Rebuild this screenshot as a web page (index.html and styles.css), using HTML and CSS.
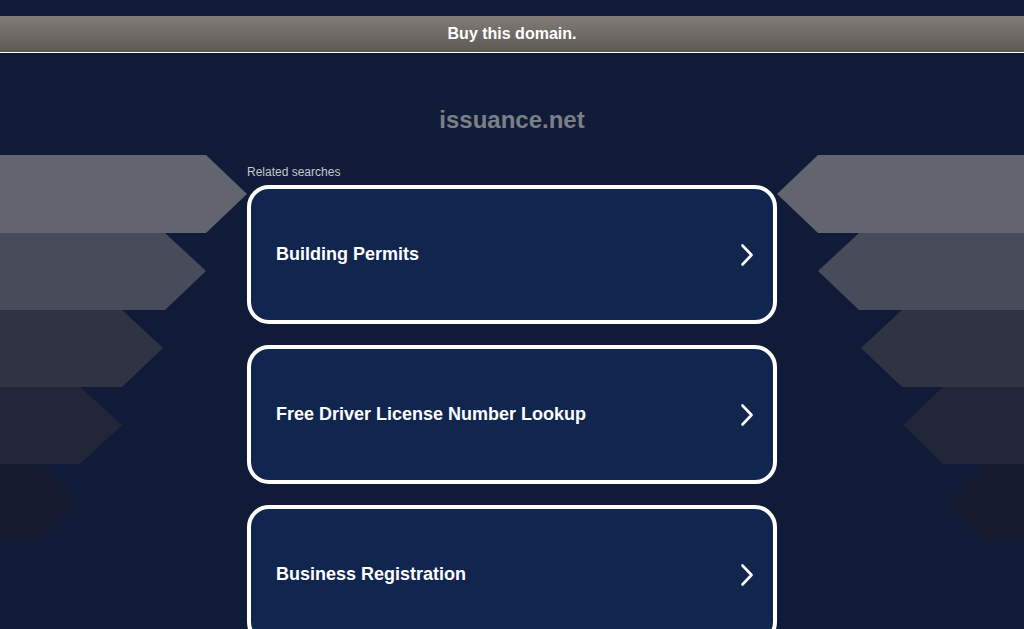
FILE: index.html
```html
<!DOCTYPE html>
<html>
<head>
<meta http-equiv="Content-Type" content="text/html; charset=utf-8"/>
<title>issuance.net</title>
<link rel="stylesheet" href="styles.css">
</head>

<body>
<svg class="deco deco-left" width="247" height="400" viewBox="0 0 247 400">
  <polygon points="0,0 206,0 247,39 206,78 0,78" fill="#62646f"/>
  <polygon points="0,78 165,78 206,116 165,155 0,155" fill="#484b59"/>
  <polygon points="0,155 122,155 163,193 122,232 0,232" fill="#303344"/>
  <polygon points="0,232 80,232 122,270 80,309 0,309" fill="#232638"/>
  <polygon points="0,309 38,309 78,347 38,386 0,386" fill="#171b2f"/>
</svg>
<svg class="deco deco-right" width="247" height="400" viewBox="0 0 247 400">
  <polygon points="247,0 41,0 0,39 41,78 247,78" fill="#62646f"/>
  <polygon points="247,78 82,78 41,116 82,155 247,155" fill="#484b59"/>
  <polygon points="247,155 125,155 84,193 125,232 247,232" fill="#303344"/>
  <polygon points="247,232 166,232 126,270 166,309 247,309" fill="#232638"/>
  <polygon points="247,309 208,309 168,347 208,386 247,386" fill="#171b2f"/>
</svg>

<div class="page">
  <div class="buy-bar">Buy this domain.</div>

  <h1 class="domain">issuance.net</h1>

  <div class="related">
    <p class="related-title">Related searches</p>

    <a class="search-card" href="#">
      <span>Building Permits</span>
      <svg class="chevron" width="12" height="22" viewBox="0 0 12 22"><path d="M1.5 1.5 L10.5 11 L1.5 20.5" fill="none" stroke="#fff" stroke-width="2.6" stroke-linecap="round" stroke-linejoin="round"/></svg>
    </a>

    <a class="search-card" href="#">
      <span>Free Driver License Number Lookup</span>
      <svg class="chevron" width="12" height="22" viewBox="0 0 12 22"><path d="M1.5 1.5 L10.5 11 L1.5 20.5" fill="none" stroke="#fff" stroke-width="2.6" stroke-linecap="round" stroke-linejoin="round"/></svg>
    </a>

    <a class="search-card" href="#">
      <span>Business Registration</span>
      <svg class="chevron" width="12" height="22" viewBox="0 0 12 22"><path d="M1.5 1.5 L10.5 11 L1.5 20.5" fill="none" stroke="#fff" stroke-width="2.6" stroke-linecap="round" stroke-linejoin="round"/></svg>
    </a>
  </div>
</div>
</body>
</html>
```

FILE: styles.css
```css
html, body {
   margin: 0;
   padding: 0;
}

body {
   font-family: 'Liberation Sans', Arial, sans-serif;
   background-color: #101c37;
   overflow: hidden;
   height: 629px;
   position: relative;
}

.deco {
   position: absolute;
   top: 155px;
   z-index: 0;
}

.deco-left {
   left: 0;
}

.deco-right {
   right: 0;
}

.page {
   position: relative;
   z-index: 1;
   padding-top: 16px;
}

.buy-bar {
   height: 36px;
   line-height: 36px;
   border-bottom: 1px solid #ffffff;
   background: linear-gradient(#817c77, #5d5955);
   color: #ffffff;
   font-size: 16px;
   font-weight: bold;
   text-align: center;
}

.domain {
   margin: 53px 0 0 0;
   font-size: 24px;
   line-height: 28px;
   font-weight: bold;
   color: #7d7f87;
   text-align: center;
}

.related {
   width: 530px;
   margin: 31px auto 0 auto;
   display: flex;
   flex-direction: column;
   gap: 21px;
}

.related-title {
   margin: 0 0 -15px 0;
   font-size: 12px;
   line-height: 14px;
   color: #c3c6cd;
}

.search-card {
   box-sizing: border-box;
   height: 139px;
   border: 4px solid #ffffff;
   border-radius: 22px;
   background-color: #11264f;
   padding: 0 20px 0 25px;
   display: flex;
   align-items: center;
   justify-content: space-between;
   color: #ffffff;
   text-decoration: none;
   font-size: 18px;
   font-weight: bold;
}

.chevron {
   display: block;
}
```
